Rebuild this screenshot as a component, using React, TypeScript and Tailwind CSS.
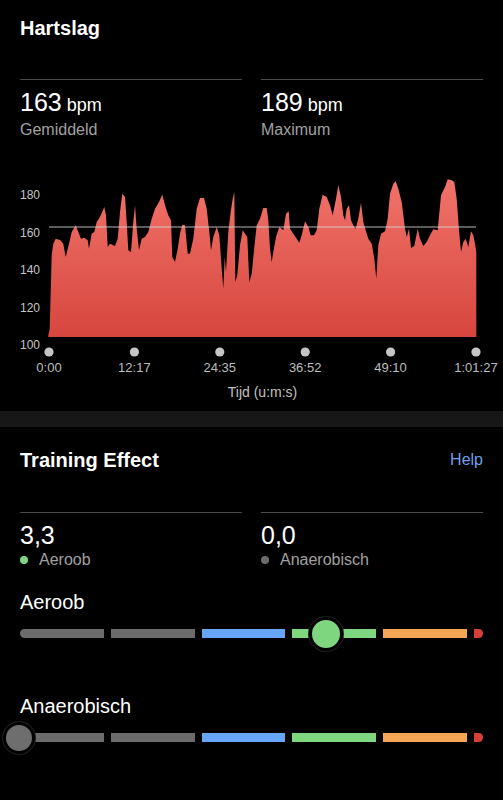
const hrPoints: [number, number][] = [
  [48.3, 333], [49.7, 326.7], [51.7, 253], [53.3, 241.7], [55.7, 236.7], [60, 238], [63.3, 241.7],
  [65.7, 255], [69, 241.7], [71.7, 230], [75.7, 223.3], [78.3, 230], [81, 236.7], [84.3, 235.7],
  [87.7, 238.3], [89, 246.7], [91.7, 231.7], [94.3, 230], [96.7, 220], [100, 215], [104.3, 205],
  [106, 213.3], [107.7, 245], [110, 241.7], [115, 244], [117.7, 236.7], [120, 210], [122.3, 191.7],
  [125, 195], [126.7, 220], [128.3, 248.3], [131, 250], [133.3, 220], [135, 203.3], [136.7, 226.7],
  [139, 248.3], [141.7, 236.7], [145, 235], [148.3, 230], [151.7, 216.7], [155, 206.7], [159, 200],
  [162.3, 192.7], [165, 203.3], [168.3, 213.3], [171, 218.3], [172.3, 255], [175, 260], [177.7, 246.7],
  [180, 231.7], [182.3, 222.7], [185, 223.3], [187.7, 251.7], [190, 251.7], [193.3, 236.7],
  [196.7, 206.7], [200, 196], [204, 196], [206.7, 206.7], [209.3, 230], [211, 248.3], [213.3, 235],
  [216.7, 225], [219.3, 233.3], [221.7, 266.7], [223.3, 286.7], [224.7, 255], [226, 270], [228.3, 230],
  [230.7, 210], [232.7, 196.7], [234.3, 190], [235.3, 280], [237.3, 273.3], [240, 243.3], [242.7, 228.3],
  [245, 231.7], [247.3, 235], [249.3, 280], [251.7, 271.7], [254, 248.3], [256.7, 223.3], [260, 216.7],
  [263.3, 206], [266.7, 206], [268.3, 218.3], [270, 246.7], [271.7, 260], [273.3, 250], [276, 235],
  [279.3, 225], [283.3, 228.3], [286, 211.7], [288.7, 209.3], [290, 226.7], [293.3, 231.7],
  [296.7, 236.7], [299.3, 240.7], [301.7, 233.3], [305, 219.3], [308.3, 225], [310.7, 233.3],
  [314, 233.3], [316.7, 228.3], [319.3, 206.7], [322.7, 192.7], [326.7, 195], [330, 203.3],
  [332.7, 213.3], [336, 196.7], [338.3, 183.3], [341, 195], [343.3, 213.3], [345, 218.3], [346.7, 206.7],
  [349, 203.3], [351, 218.3], [353.3, 223.3], [355.7, 226.7], [358.3, 216.7], [361, 200.7], [363.3, 220],
  [365.7, 228.3], [368.3, 236.7], [371.7, 241.7], [374.3, 256.7], [376.3, 276.7], [378.3, 243.3],
  [381, 231.7], [385, 229.3], [387.7, 216.7], [390, 191.7], [393.3, 181.7], [395.7, 179.3],
  [398.3, 186.7], [401.7, 200], [405, 226.7], [406.7, 235], [409, 226.7], [411, 246], [414.3, 244],
  [417.7, 226.7], [420, 236.7], [423.3, 244], [426.7, 240], [430, 233.3], [433.3, 227.3], [437.7, 228.3],
  [441, 193.3], [445, 185], [447.7, 177.3], [451.7, 178.3], [454.3, 180], [456.7, 196.7], [459, 228.3],
  [461, 250], [463.3, 240], [465.7, 236.7], [468.3, 245], [471, 229.3], [473.3, 233.3], [475, 241.7],
  [476.3, 250], [476.3, 335], [48.3, 335],
]

const yLabels = ["180", "160", "140", "120", "100"]
const timeLabels = ["0:00", "12:17", "24:35", "36:52", "49:10", "1:01:27"]

function HeartChart() {
  const pts = hrPoints.map((p) => p.join(",")).join(" ")
  const dotX = [49, 134.4, 219.8, 305.2, 390.6, 476]
  return (
    <div>
      <div className="flex pl-5 h-[185px]">
        <div className="w-6 pt-[15px] pb-1 flex flex-col justify-between text-[12px] leading-4 text-[#c4c4c4]">
          {yLabels.map((l) => (
            <span key={l}>{l}</span>
          ))}
        </div>
        <svg width="437" height="185" viewBox="44 170 437 185" className="block">
          <defs>
            <linearGradient id="hrFill" x1="0" y1="0" x2="0" y2="1">
              <stop offset="0" stopColor="#f1736a" />
              <stop offset="1" stopColor="#d6463e" />
            </linearGradient>
          </defs>
          <polygon points={pts} fill="url(#hrFill)" />
          <line x1="49" y1="225" x2="476" y2="225" stroke="#d8d8d8" strokeOpacity="0.85" strokeWidth="1" />
          {dotX.map((x) => (
            <circle key={x} cx={x} cy="350" r="4.6" fill="#c6c6c6" />
          ))}
        </svg>
      </div>
      <div className="ml-6 w-[477px] mt-[3px] flex justify-between text-[13px] leading-4 text-[#bdbdbd]">
        {timeLabels.map((t) => (
          <span key={t} className="w-[50px] text-center">
            {t}
          </span>
        ))}
      </div>
      <div className="ml-[49px] w-[427px] mt-[7px] text-center text-[14px] leading-[18px] text-[#c2c2c2]">
        Tijd (u:m:s)
      </div>
    </div>
  )
}

function Stat({ value, unit, label, dot }: { value: string; unit?: string; label: string; dot?: string }) {
  return (
    <div className="flex-1 border-t border-[#4a4a4a] pt-[7px]">
      <div className="text-[25px] leading-[30px] text-white">
        {value}
        {unit && <span className="text-[18px]"> {unit}</span>}
      </div>
      <div className="flex items-center text-[16px] leading-5 text-[#a0a0a0]">
        {dot && <span className={`w-2 h-2 rounded-full mr-[11px] ${dot}`} />}
        {label}
      </div>
    </div>
  )
}

function EffectBar({ knobX, knobColor, knobSize }: { knobX: number; knobColor: string; knobSize: string }) {
  return (
    <div className="relative mx-5 h-[9px] flex gap-[7px]">
      <div className="flex-1 bg-[#6c6c6c] rounded-l-full" />
      <div className="flex-1 bg-[#6c6c6c]" />
      <div className="flex-1 bg-[#68a6f8]" />
      <div className="flex-1 bg-[#7ed67f]" />
      <div className="flex-1 bg-[#f4a654]" />
      <div className="w-[9px] bg-[#d8403a] rounded-r-full" />
      <div
        className={`absolute top-1/2 -translate-x-1/2 -translate-y-1/2 rounded-full border-[3px] border-black shadow-[0_0_0_1px_#1f1f1f] ${knobColor} ${knobSize}`}
        style={{ left: knobX }}
      />
    </div>
  )
}

export default function App() {
  return (
    <div className="w-[503px] h-[800px] overflow-hidden bg-black text-white font-['Liberation_Sans',Arial,sans-serif]">
      <section>
        <h2 className="px-5 pt-4 text-[20px] leading-6 font-bold">Hartslag</h2>
        <div className="flex gap-[19px] px-5 mt-[39px]">
          <Stat value="163" unit="bpm" label="Gemiddeld" />
          <Stat value="189" unit="bpm" label="Maximum" />
        </div>
        <div className="mt-[32px]">
          <HeartChart />
        </div>
      </section>

      <div className="mt-[10px] h-4 bg-[#171717]" />

      <section>
        <div className="flex items-center justify-between px-5 pt-[21px]">
          <h2 className="text-[20px] leading-6 font-bold">Training Effect</h2>
          <span className="text-[16px] text-[#6f9fe8]">Help</span>
        </div>
        <div className="flex gap-[19px] px-5 mt-[40px]">
          <Stat value="3,3" label="Aeroob" dot="bg-[#7ed67f]" />
          <Stat value="0,0" label="Anaerobisch" dot="bg-[#6c6c6c]" />
        </div>
        <div className="px-5 mt-5 text-[20px] leading-6">Aeroob</div>
        <div className="mt-[15px]">
          <EffectBar knobX={306} knobColor="bg-[#7ed67f]" knobSize="w-[34px] h-[34px]" />
        </div>
        <div className="px-5 mt-[56px] text-[20px] leading-6">Anaerobisch</div>
        <div className="mt-[15px]">
          <EffectBar knobX={-1} knobColor="bg-[#6e6e6e]" knobSize="w-[32px] h-[32px]" />
        </div>
      </section>
    </div>
  )
}
